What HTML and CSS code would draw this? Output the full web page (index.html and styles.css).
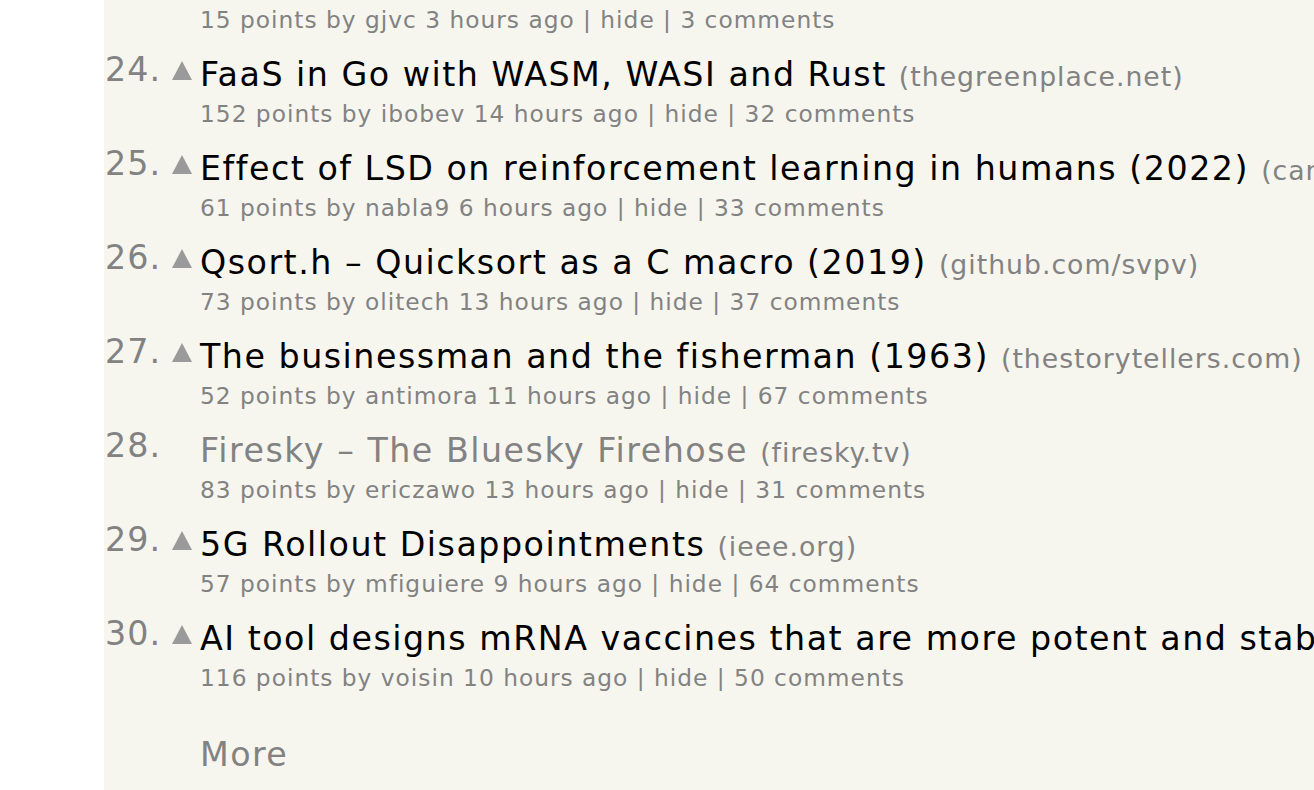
FILE: index.html
```html
<!DOCTYPE html>
<html lang="en">
<head>
  <meta charset="UTF-8">
  <title>Hacker News</title>
  <link rel="stylesheet" href="styles.css">
</head>
<body>
  <div class="page">

    <div class="item">
      <div class="subtext">15 points by gjvc 3 hours ago | hide | 3 comments</div>
    </div>

    <div class="item">
      <div class="titleline">
        <span class="rank">24.</span>
        <span class="vote"><span class="arrow"></span></span>
        <span class="title"><a href="#">FaaS in Go with WASM, WASI and Rust</a> <span class="sitebit">(thegreenplace.net)</span></span>
      </div>
      <div class="subtext">152 points by ibobev 14 hours ago | hide | 32 comments</div>
    </div>

    <div class="item">
      <div class="titleline">
        <span class="rank">25.</span>
        <span class="vote"><span class="arrow"></span></span>
        <span class="title"><a href="#">Effect of LSD on reinforcement learning in humans (2022)</a> <span class="sitebit">(cambridge.org)</span></span>
      </div>
      <div class="subtext">61 points by nabla9 6 hours ago | hide | 33 comments</div>
    </div>

    <div class="item">
      <div class="titleline">
        <span class="rank">26.</span>
        <span class="vote"><span class="arrow"></span></span>
        <span class="title"><a href="#">Qsort.h – Quicksort as a C macro (2019)</a> <span class="sitebit">(github.com/svpv)</span></span>
      </div>
      <div class="subtext">73 points by olitech 13 hours ago | hide | 37 comments</div>
    </div>

    <div class="item">
      <div class="titleline">
        <span class="rank">27.</span>
        <span class="vote"><span class="arrow"></span></span>
        <span class="title"><a href="#">The businessman and the fisherman (1963)</a> <span class="sitebit">(thestorytellers.com)</span></span>
      </div>
      <div class="subtext">52 points by antimora 11 hours ago | hide | 67 comments</div>
    </div>

    <div class="item">
      <div class="titleline">
        <span class="rank">28.</span>
        <span class="vote"></span>
        <span class="title"><a href="#" class="visited">Firesky – The Bluesky Firehose</a> <span class="sitebit">(firesky.tv)</span></span>
      </div>
      <div class="subtext">83 points by ericzawo 13 hours ago | hide | 31 comments</div>
    </div>

    <div class="item">
      <div class="titleline">
        <span class="rank">29.</span>
        <span class="vote"><span class="arrow"></span></span>
        <span class="title"><a href="#">5G Rollout Disappointments</a> <span class="sitebit">(ieee.org)</span></span>
      </div>
      <div class="subtext">57 points by mfiguiere 9 hours ago | hide | 64 comments</div>
    </div>

    <div class="item">
      <div class="titleline">
        <span class="rank">30.</span>
        <span class="vote"><span class="arrow"></span></span>
        <span class="title"><a href="#">AI tool designs mRNA vaccines that are more potent and stable</a> <span class="sitebit">(nature.com)</span></span>
      </div>
      <div class="subtext">116 points by voisin 10 hours ago | hide | 50 comments</div>
    </div>

    <div class="more"><a href="#">More</a></div>

  </div>
</body>
</html>
```

FILE: styles.css
```css
html, body {
  margin: 0;
  padding: 0;
  background: #fff;
  overflow: hidden;
}

body {
  font-family: "DejaVu Sans", Verdana, sans-serif;
}

a {
  color: inherit;
  text-decoration: none;
}

.page {
  margin-left: 104px;
  min-height: 790px;
  padding-top: 2px;
  background: #f6f6ef;
  white-space: nowrap;
}

.item {
  margin-bottom: 16px;
}

.titleline {
  display: flex;
  align-items: flex-start;
  height: 43px;
  line-height: 43px;
  font-size: 33.3px;
}

.rank {
  width: 57px;
  flex: none;
  text-align: right;
  color: #828282;
  letter-spacing: 1px;
  margin-top: -5px;
}

.vote {
  width: 39px;
  flex: none;
  display: flex;
  justify-content: flex-start;
}

.arrow {
  width: 0;
  height: 0;
  margin: 8px 0 0 11px;
  border-left: 10px solid transparent;
  border-right: 10px solid transparent;
  border-bottom: 19px solid #9a9a9a;
}

.title {
  color: #000;
  letter-spacing: 1.5px;
}

.title .visited {
  color: #828282;
}

.sitebit {
  font-size: 26.7px;
  letter-spacing: 1px;
  color: #828282;
}

.subtext {
  padding-left: 96px;
  height: 35px;
  line-height: 35px;
  font-size: 23.3px;
  letter-spacing: 1px;
  color: #828282;
}

.more {
  margin-top: 38px;
  padding-left: 96px;
  line-height: 43px;
  font-size: 33.3px;
  letter-spacing: 1.4px;
  color: #828282;
}
```
